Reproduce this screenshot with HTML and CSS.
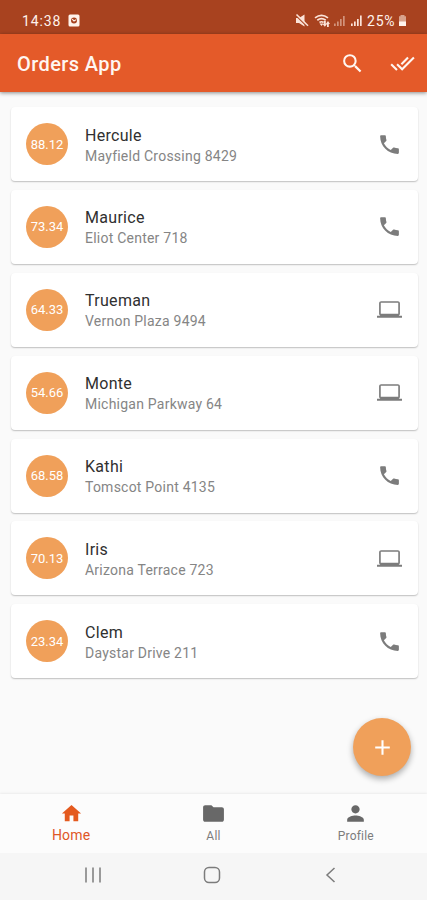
FILE: index.html
```html
<!DOCTYPE html>
<html lang="en">
<head>
<meta charset="utf-8">
<title>Orders App</title>
<link rel="stylesheet" href="styles.css">
</head>
<body>
<svg class="defs" width="0" height="0">
  <symbol id="call" viewBox="0 0 24 24"><path d="M6.620 10.790c1.440 2.830 3.760 5.140 6.590 6.590l2.200-2.200c.27-.27.67-.36 1.020-.24 1.120.37 2.330.57 3.570.57.55 0 1 .45 1 1V20c0 .55-.45 1-1 1C10.610 21 3 13.390 3 4c0-.55.45-1 1-1h3.500c.55 0 1 .45 1 1 0 1.250.2 2.450.57 3.570.11.35.03.74-.25 1.020z"/></symbol>
  <symbol id="laptop" viewBox="0 0 24 24"><path d="M20 18c1.100 0 1.990-.9 1.990-2L22 6c0-1.100-.9-2-2-2H4c-1.100 0-2 .9-2 2v10c0 1.100.9 2 2 2H0v2h24v-2zM3.600 5.600h16.800v10.400H3.600z"/></symbol>
</svg>
<div class="screen">
  <header class="status">
    <span class="clock">14:38</span>
    <svg class="badge" viewBox="0 0 12 13"><rect x=".5" y=".5" width="11" height="12" rx="1.500" fill="#fff3ec"/><circle cx="6" cy="6.500" r="3" fill="#a8421f"/><path d="M4.200 5.200 6 7l2.200-1.400" fill="none" stroke="#fff3ec" stroke-width="1.100"/></svg>
    <svg class="signals" viewBox="0 0 69 15" fill="#fbe3d8">
      <path d="M1 5h3L9.500 1.500v12L4 10H1z"/>
      <path d="M1 2.500 12.500 13.800" stroke="#a8421f" stroke-width="1.500"/><path d="M1.500 1.500 13 12.800" stroke="#fbe3d8" stroke-width="1.600"/>
      <g fill="none" stroke="#fbe3d8" stroke-width="1.700"><path d="M20 4.800q6.500-5 13 0M22.300 7.200q4.200-3.200 8.400 0M24.500 9.500q2-1.500 4 0"/></g>
      <path d="m24.500 10.500 2 2.500 2-2.500zM28.800 8h2v3h1.200l-2.200 2.800-2.200-2.800h1.200zM32 14V11h-1.200L33 8l2 3h-1.200v3z"/>
      <g opacity=".5"><path d="M39 10.500h1.700V13H39zM42 8.500h1.700V13H42zM45 6h1.700v7H45zM48 3h1.700v10H48z"/></g>
      <path d="M56 10.500h1.700V13H56zM59 8.500h1.700V13H59zM62 6h1.700v7H62zM65 2.500h1.700V13H65z"/>
    </svg>
    <span class="charge">25%</span>
    <svg class="battery" viewBox="0 0 9 13"><path d="M2.500 1h4v1.300H8V9H1V2.300h1.500z" fill="#d8a28c"/><path d="M1 7.500h7V12H1z" fill="#fff3ec"/></svg>
  </header>
  <div class="appbar">
    <h1>Orders App</h1>
    <svg class="search" viewBox="0 0 24 24"><path d="M15.500 14h-.79l-.28-.27A6.471 6.471 0 0 0 16 9.500 6.500 6.500 0 1 0 9.500 16c1.610 0 3.090-.59 4.230-1.570l.27.28v.79l5 4.990L20.490 19zm-6 0C7.010 14 5 11.990 5 9.500S7.010 5 9.500 5 14 7.010 14 9.500 11.990 14 9.500 14z"/></svg>
    <svg class="checks" viewBox="0 0 24 24"><path d="m18 7-1.410-1.410-6.340 6.340 1.410 1.410zm4.240-1.410L11.660 16.170 7.480 12l-1.410 1.410L11.660 19l12-12zM.41 13.410 6 19l1.410-1.410L1.830 12z"/></svg>
  </div>
  <main class="orders">
    <article class="card"><span class="amount">88.12</span><div class="who"><h2>Hercule</h2><p>Mayfield Crossing 8429</p></div><svg class="kind"><use href="#call"/></svg></article>
    <article class="card"><span class="amount">73.34</span><div class="who"><h2>Maurice</h2><p>Eliot Center 718</p></div><svg class="kind"><use href="#call"/></svg></article>
    <article class="card"><span class="amount">64.33</span><div class="who"><h2>Trueman</h2><p>Vernon Plaza 9494</p></div><svg class="kind"><use href="#laptop"/></svg></article>
    <article class="card"><span class="amount">54.66</span><div class="who"><h2>Monte</h2><p>Michigan Parkway 64</p></div><svg class="kind"><use href="#laptop"/></svg></article>
    <article class="card"><span class="amount">68.58</span><div class="who"><h2>Kathi</h2><p>Tomscot Point 4135</p></div><svg class="kind"><use href="#call"/></svg></article>
    <article class="card"><span class="amount">70.13</span><div class="who"><h2>Iris</h2><p>Arizona Terrace 723</p></div><svg class="kind"><use href="#laptop"/></svg></article>
    <article class="card"><span class="amount">23.34</span><div class="who"><h2>Clem</h2><p>Daystar Drive 211</p></div><svg class="kind"><use href="#call"/></svg></article>
  </main>
  <button class="fab" aria-label="Add order"><svg viewBox="0 0 24 24"><path d="M19 13h-6v6h-2v-6H5v-2h6V5h2v6h6z"/></svg></button>
  <nav class="tabs">
    <a class="tab active"><svg viewBox="0 0 24 24"><path d="M10 20v-6h4v6h5v-8h3L12 3 2 12h3v8z"/></svg><span>Home</span></a>
    <a class="tab"><svg viewBox="0 0 24 24"><path d="M10 4H4c-1.100 0-1.990.9-1.990 2L2 18c0 1.100.9 2 2 2h16c1.100 0 2-.9 2-2V8c0-1.100-.9-2-2-2h-8z"/></svg><span>All</span></a>
    <a class="tab"><svg viewBox="0 0 24 24"><path d="M12 12c2.210 0 4-1.790 4-4s-1.790-4-4-4-4 1.790-4 4 1.790 4 4 4zm0 2c-2.670 0-8 1.340-8 4v2h16v-2c0-2.660-5.330-4-8-4z"/></svg><span>Profile</span></a>
  </nav>
  <footer class="system">
    <svg viewBox="0 0 20 20"><path d="M3 2.500v15M10 2.500v15M17 2.500v15"/></svg>
    <svg viewBox="0 0 20 20"><rect x="2.500" y="2.500" width="15" height="15" rx="4.500"/></svg>
    <svg viewBox="0 0 20 20"><path d="M13.500 3 6 10l7.500 7"/></svg>
  </footer>
</div>
</body>
</html>
```
FILE: styles.css
```css
* { box-sizing: border-box; }
body { margin: 0; font-family: Roboto, "Liberation Sans", sans-serif; background: #fafafa; }
h1, h2, p { margin: 0; font-weight: 400; }
svg { display: block; flex: none; }
.defs { position: absolute; }
.screen { position: relative; width: 427px; height: 900px; display: flex; flex-direction: column; overflow: hidden; background: #fafafa; }

.status { height: 34px; flex: none; display: flex; align-items: center; padding: 7px 20px 0 22px; background: #a8421f; color: #fff3ec; font-size: 14px; line-height: 16px; }
.clock { width: 40px; letter-spacing: .9px; }
.badge { width: 12px; height: 13px; margin-left: 6px; }
.signals { width: 69px; height: 15px; margin-left: auto; }
.charge { width: 31px; margin-left: 3px; letter-spacing: .8px; }
.battery { width: 9px; height: 13px; }

.appbar { height: 58px; flex: none; z-index: 1; display: flex; align-items: center; padding: 0 12px 0 17px; background: #e45a29; box-shadow: 0 1px 4px rgba(0, 0, 0, .45); }
.appbar h1 { flex: 1; color: #fff6f1; font-size: 20px; font-weight: 500; letter-spacing: .4px; line-height: 24px; padding-top: 1px; }
.appbar svg { width: 25px; height: 25px; fill: #fff6f1; }
.appbar .checks { margin-left: 25px; }

.orders { flex: 1; min-height: 0; padding: 15px 9px 0 11px; display: flex; flex-direction: column; gap: 8.9px; }
.card { height: 74px; flex: none; display: flex; align-items: center; padding: 0 16px 0 15px; border-radius: 4px; background: #fff; box-shadow: 0 1px 1.5px rgba(0, 0, 0, .24); }
.amount { width: 42px; height: 42px; display: flex; align-items: center; justify-content: center; border-radius: 50%; background: #f0a05a; color: #fff; font-size: 13px; }
.who { flex: 1; margin-left: 17px; padding-top: 2px; }
.who h2 { color: #303030; font-size: 16px; line-height: 21px; letter-spacing: .3px; }
.who p { color: #858585; font-size: 14px; line-height: 20px; letter-spacing: .23px; }
.kind { width: 25px; height: 25px; fill: #7c7c7c; }

.fab { position: absolute; left: 353px; top: 718px; width: 58px; height: 58px; padding: 0; border: 0; border-radius: 50%; display: grid; place-items: center; background: #f0a05a; box-shadow: 0 3px 6px rgba(0, 0, 0, .32); }
.fab svg { width: 25px; height: 25px; fill: #fff; }

.tabs { height: 59px; flex: none; display: flex; background: #fcfcfc; box-shadow: 0 -1px 2px rgba(0, 0, 0, .06); }
.tab { flex: 1; display: flex; flex-direction: column; align-items: center; padding-top: 7px; color: #7c7c7c; font-size: 12px; line-height: 16px; letter-spacing: .2px; }
.tab svg { width: 25px; height: 25px; fill: #686868; }
.tab span { margin-top: 2px; }
.tab.active { color: #df5727; font-size: 14px; }
.tab.active svg { width: 23px; height: 25px; fill: #e45a1f; }
.tab.active span { margin-top: 1px; }

.system { height: 47px; flex: none; display: flex; align-items: center; padding: 0 86px 4px 83px; justify-content: space-between; background: #f6f6f6; }
.system svg { width: 20px; height: 20px; fill: none; stroke: #7c7c7c; stroke-width: 1.5; }
```
